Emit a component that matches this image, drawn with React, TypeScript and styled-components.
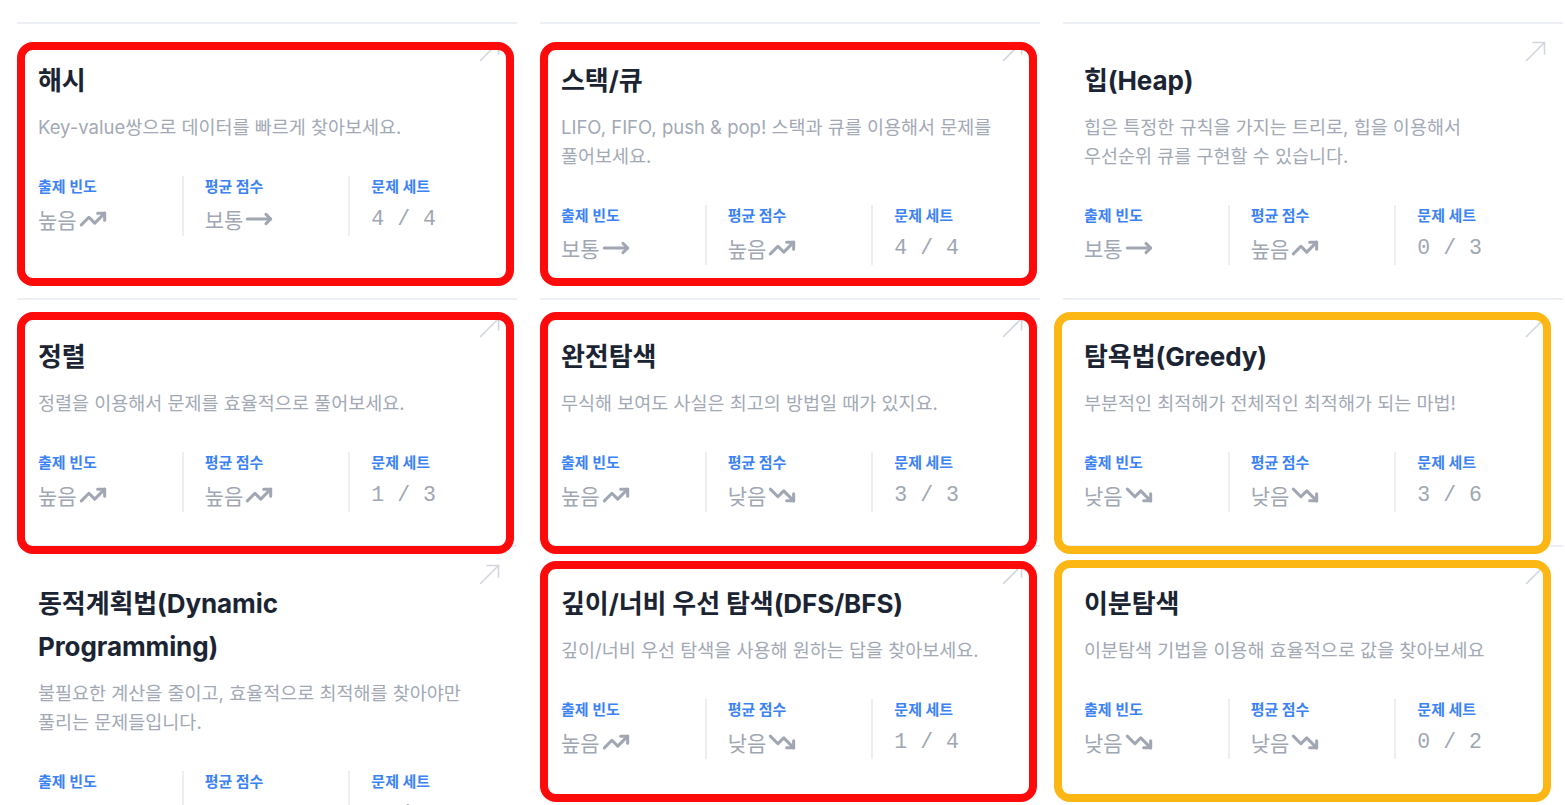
import React from 'react';
import styled, { createGlobalStyle } from 'styled-components';
import { TrendingUp, TrendingDown, MoveRight } from 'lucide-react';

type Level = '높음' | '보통' | '낮음';

interface Mark {
  color: string;
  top: number;
  height: number;
  left: number;
  right: number;
}

interface Topic {
  title: string;
  desc: string;
  freq: Level;
  score: Level;
  solved: number;
  total: number;
  mark?: Mark;
}

const RED = '#fe0a0a';
const YELLOW = '#fdb714';

const topics: Topic[] = [
  {
    title: '해시',
    desc: 'Key-value쌍으로 데이터를 빠르게 찾아보세요.',
    freq: '높음',
    score: '보통',
    solved: 4,
    total: 4,
    mark: { color: RED, top: 18, height: 244, left: 0, right: 3 },
  },
  {
    title: '스택/큐',
    desc: 'LIFO, FIFO, push & pop! 스택과 큐를 이용해서 문제를 풀어보세요.',
    freq: '보통',
    score: '높음',
    solved: 4,
    total: 4,
    mark: { color: RED, top: 18, height: 244, left: 0, right: 3 },
  },
  {
    title: '힙(Heap)',
    desc: '힙은 특정한 규칙을 가지는 트리로, 힙을 이용해서 우선순위 큐를 구현할 수 있습니다.',
    freq: '보통',
    score: '높음',
    solved: 0,
    total: 3,
  },
  {
    title: '정렬',
    desc: '정렬을 이용해서 문제를 효율적으로 풀어보세요.',
    freq: '높음',
    score: '높음',
    solved: 1,
    total: 3,
    mark: { color: RED, top: 12, height: 242, left: 0, right: 3 },
  },
  {
    title: '완전탐색',
    desc: '무식해 보여도 사실은 최고의 방법일 때가 있지요.',
    freq: '높음',
    score: '낮음',
    solved: 3,
    total: 3,
    mark: { color: RED, top: 12, height: 242, left: 0, right: 3 },
  },
  {
    title: '탐욕법(Greedy)',
    desc: '부분적인 최적해가 전체적인 최적해가 되는 마법!',
    freq: '낮음',
    score: '낮음',
    solved: 3,
    total: 6,
    mark: { color: YELLOW, top: 12, height: 242, left: -9, right: 12 },
  },
  {
    title: '동적계획법(Dynamic Programming)',
    desc: '불필요한 계산을 줄이고, 효율적으로 최적해를 찾아야만 풀리는 문제들입니다.',
    freq: '낮음',
    score: '낮음',
    solved: 0,
    total: 7,
  },
  {
    title: '깊이/너비 우선 탐색(DFS/BFS)',
    desc: '깊이/너비 우선 탐색을 사용해 원하는 답을 찾아보세요.',
    freq: '높음',
    score: '낮음',
    solved: 1,
    total: 4,
    mark: { color: RED, top: 14, height: 241, left: 0, right: 3 },
  },
  {
    title: '이분탐색',
    desc: '이분탐색 기법을 이용해 효율적으로 값을 찾아보세요',
    freq: '낮음',
    score: '낮음',
    solved: 0,
    total: 2,
    mark: { color: YELLOW, top: 13, height: 242, left: -9, right: 12 },
  },
];

const GlobalStyle = createGlobalStyle`
  html, body {
    margin: 0;
    padding: 0;
    background: #ffffff;
    overflow: hidden;
  }
  body {
    font-family: Inter, "Noto Sans CJK KR", sans-serif;
    -webkit-font-smoothing: antialiased;
    word-break: keep-all;
  }
`;

const Page = styled.main`
  padding: 22px 0 0 17px;
`;

const Grid = styled.div`
  display: grid;
  grid-template-columns: repeat(3, 500px);
  column-gap: 23px;
  align-items: stretch;
`;

const Card = styled.article`
  position: relative;
  border-top: 2px solid #eceff3;
  padding: 35px 0 33px;
  display: flex;
  flex-direction: column;
`;

const Title = styled.h3`
  margin: 0 21px;
  max-width: 400px;
  font-size: 26px;
  line-height: 43px;
  font-weight: 700;
  color: #1b2433;
  letter-spacing: -0.1px;
`;

const Desc = styled.p`
  margin: 11px 21px 0;
  max-width: 440px;
  font-size: 18.5px;
  line-height: 29px;
  color: #a2a9b5;
`;

const Stats = styled.div`
  margin-top: 34px;
  display: grid;
  grid-template-columns: repeat(3, 1fr);
`;

const Stat = styled.div<{ $divided: boolean }>`
  height: 60px;
  padding-left: ${(p) => (p.$divided ? 21 : 21)}px;
  border-left: ${(p) => (p.$divided ? '2px solid #eceff2' : 'none')};
  margin-left: ${(p) => (p.$divided ? -2 : 0)}px;
`;

const Label = styled.div`
  font-size: 15px;
  line-height: 22px;
  font-weight: 700;
  color: #3b82f6;
`;

const Value = styled.div`
  margin-top: 6px;
  height: 30px;
  display: flex;
  align-items: center;
  gap: 2px;
  font-size: 21px;
  line-height: 30px;
  color: #a0a7b3;
  font-family: "Noto Sans CJK KR", sans-serif;
`;

const Count = styled.span`
  font-family: "Liberation Mono", "DejaVu Sans Mono", monospace;
  font-size: 21.5px;
  white-space: pre;
`;

const Corner = styled.svg`
  position: absolute;
  top: 17px;
  right: 17px;
  width: 21px;
  height: 21px;
`;

const Highlight = styled.div<{ $m: Mark }>`
  position: absolute;
  pointer-events: none;
  z-index: 2;
  top: ${(p) => p.$m.top}px;
  height: ${(p) => p.$m.height}px;
  left: ${(p) => p.$m.left}px;
  right: ${(p) => p.$m.right}px;
  border: 8px solid ${(p) => p.$m.color};
  border-radius: 16px;
  box-sizing: border-box;
`;

const TrendIcon: React.FC<{ level: Level }> = ({ level }) => {
  const props = { size: 28, strokeWidth: 2.6, color: '#a0a7b3' };
  if (level === '높음') return <TrendingUp {...props} />;
  if (level === '낮음') return <TrendingDown {...props} />;
  return <MoveRight {...props} />;
};

const LevelValue: React.FC<{ level: Level }> = ({ level }) => (
  <Value>
    <span>{level}</span>
    <TrendIcon level={level} />
  </Value>
);

const TopicCard: React.FC<{ t: Topic }> = ({ t }) => (
  <Card>
    <Corner viewBox="0 0 21 21" fill="none" stroke="#cfd6df" strokeWidth="1.6" strokeLinecap="round" strokeLinejoin="round">
      <path d="M1.5 19.5 L19.5 1.5" />
      <path d="M8 1.5 H19.5 V13" />
    </Corner>
    <Title>{t.title}</Title>
    <Desc>{t.desc}</Desc>
    <Stats>
      <Stat $divided={false}>
        <Label>출제 빈도</Label>
        <LevelValue level={t.freq} />
      </Stat>
      <Stat $divided>
        <Label>평균 점수</Label>
        <LevelValue level={t.score} />
      </Stat>
      <Stat $divided>
        <Label>문제 세트</Label>
        <Value>
          <Count>{`${t.solved} / ${t.total}`}</Count>
        </Value>
      </Stat>
    </Stats>
    {t.mark && <Highlight $m={t.mark} />}
  </Card>
);

export default function App() {
  return (
    <>
      <GlobalStyle />
      <Page>
        <Grid>
          {topics.map((t) => (
            <TopicCard key={t.title} t={t} />
          ))}
        </Grid>
      </Page>
    </>
  );
}
